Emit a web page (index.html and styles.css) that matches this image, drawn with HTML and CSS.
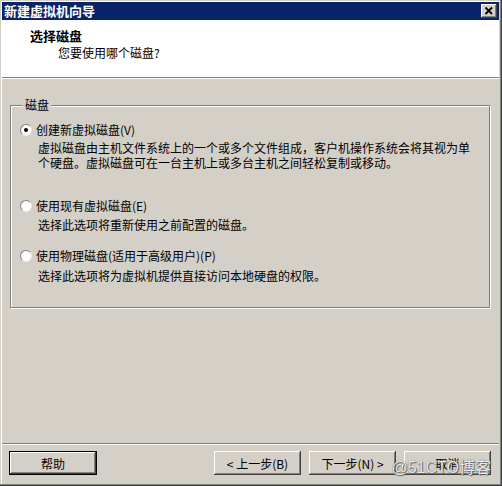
FILE: index.html
```html
<!DOCTYPE html>
<html>
<head>
<meta charset="utf-8">
<link rel="stylesheet" href="styles.css">
</head>
<body>
<div class="win">
  <div class="titlebar">
    <span class="title">新建虚拟机向导</span>
    <span class="close"><svg width="16" height="14" viewBox="0 0 16 14"><path d="M4.5 3.5 L11 10 M11 3.5 L4.5 10" stroke="#000" stroke-width="1.8" fill="none"/></svg></span>
  </div>
  <div class="header">
    <div class="h1">选择磁盘</div>
    <div class="h2">您要使用哪个磁盘?</div>
  </div>
  <div class="sep"></div>
  <div class="body">
    <fieldset class="group">
      <legend>磁盘</legend>
      <div class="opt opt1">
        <div class="row"><span class="radio checked"></span><span>创建新虚拟磁盘(V)</span></div>
        <div class="desc">虚拟磁盘由主机文件系统上的一个或多个文件组成，客户机操作系统会将其视为单<br>个硬盘。虚拟磁盘可在一台主机上或多台主机之间轻松复制或移动。</div>
      </div>
      <div class="opt opt2">
        <div class="row"><span class="radio"></span><span>使用现有虚拟磁盘(E)</span></div>
        <div class="desc">选择此选项将重新使用之前配置的磁盘。</div>
      </div>
      <div class="opt opt3">
        <div class="row"><span class="radio"></span><span>使用物理磁盘(适用于高级用户)(P)</span></div>
        <div class="desc">选择此选项将为虚拟机提供直接访问本地硬盘的权限。</div>
      </div>
    </fieldset>
  </div>
  <div class="sep"></div>
  <div class="buttons">
    <button class="btn help">帮助</button>
    <div class="right">
      <button class="btn">&lt; 上一步(B)</button>
      <button class="btn">下一步(N) &gt;</button>
      <button class="btn">取消</button>
    </div>
  </div>
  <div class="watermark">@51CTO博客</div>
</div>
</body>
</html>
```
FILE: styles.css
```css
html, body {
  margin: 0;
  padding: 0;
  background: #d4d0c8;
}
body {
  font-family: "Noto Sans CJK SC", "Liberation Sans", sans-serif;
  font-size: 12px;
  color: #000;
}
.win {
  position: relative;
  width: 502px;
  height: 486px;
  box-sizing: border-box;
  padding: 2px 3px 3px 2px;
  background: #d4d0c8;
  display: flex;
  flex-direction: column;
  box-shadow: inset -1px -1px 0 #404040, inset -2px -2px 0 #808080, inset 1px 1px 0 #d4d0c8, inset 2px 2px 0 #ffffff;
}
.titlebar {
  height: 18px;
  background: #0a246a;
  display: flex;
  align-items: center;
  justify-content: space-between;
  padding: 0 2px 0 2px;
}
.title {
  color: #fff;
  font-weight: bold;
  font-size: 13px;
  line-height: 16px;
}
.close {
  width: 16px;
  height: 14px;
  background: #d4d0c8;
  display: flex;
  box-shadow: inset -1px -1px 0 #404040, inset 1px 1px 0 #fff, inset -2px -2px 0 #808080;
}
.header {
  height: 57px;
  background: #fff;
  box-sizing: border-box;
  padding-top: 8px;
}
.h1 {
  font-weight: bold;
  font-size: 13px;
  line-height: 16px;
  padding-left: 28px;
}
.h2 {
  line-height: 16px;
  padding-left: 56px;
  margin-top: 1px;
}
.sep {
  height: 0;
  border-top: 1px solid #808080;
  border-bottom: 1px solid #fff;
}
.body {
  flex: 1;
  padding: 19px 9px 0 8px;
}
.group {
  margin: 0;
  padding: 10px 0 0 9px;
  height: 210px;
  box-sizing: border-box;
  border: 1px solid #808080;
  box-shadow: 1px 1px 0 #fff, inset 1px 1px 0 #fff;
}
.group legend {
  padding: 0 2px;
  margin-left: 3px;
  line-height: 14px;
  background: #d4d0c8;
}
.row {
  display: flex;
  align-items: center;
  height: 16px;
  line-height: 16px;
}
.radio {
  width: 10px;
  height: 10px;
  border-radius: 50%;
  background: #fff;
  border: 1px solid;
  border-color: #808080 #e8e8e8 #e8e8e8 #808080;
  margin-right: 4px;
  position: relative;
  flex: none;
}
.radio.checked::after {
  content: "";
  position: absolute;
  left: 3px;
  top: 3px;
  width: 4px;
  height: 4px;
  border-radius: 50%;
  background: #000;
}
.desc {
  padding-left: 18px;
  line-height: 15px;
  margin-top: 2px;
}
.opt2 { margin-top: 28px; }
.opt2 .desc { margin-top: 3px; }
.opt3 { margin-top: 16px; }
.opt3 .desc { margin-top: 4px; }
.buttons {
  height: 38px;
  box-sizing: border-box;
  padding: 6px 8px 0 7px;
  display: flex;
  justify-content: space-between;
  align-items: flex-start;
}
.right {
  display: flex;
  gap: 8px;
}
.btn {
  width: 87px;
  height: 24px;
  font-family: inherit;
  font-size: 12px;
  background: #d4d0c8;
  border: none;
  padding: 0;
  color: #000;
  box-shadow: inset -1px -1px 0 #404040, inset 1px 1px 0 #fff, inset -2px -2px 0 #808080;
}
.btn.help {
  width: 88px;
  border: 1px solid #000;
}
.watermark {
  position: absolute;
  right: 11px;
  bottom: 9px;
  font-size: 16px;
  line-height: 18px;
  color: rgba(255, 255, 255, 0.9);
  text-shadow: 0 0 1px #444, 1px 1px 1px #666;
  font-family: "Liberation Sans", "Noto Sans CJK SC", sans-serif;
}
```
